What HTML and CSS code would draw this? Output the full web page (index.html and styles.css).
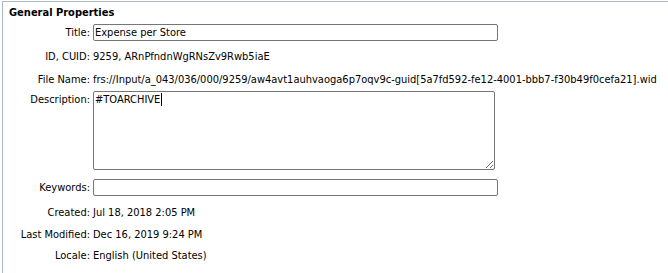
FILE: index.html
```html
<!DOCTYPE html>
<html lang="en">
<head>
    <meta charset="UTF-8">
    <title>General Properties</title>
    <link rel="stylesheet" href="styles.css">
</head>
<body>
    <div class="panel">
        <div class="panel-title">General Properties</div>
        <div class="props">
            <label class="prop-label">Title:</label>
            <div class="prop-value"><input type="text" class="field" value="Expense per Store"></div>

            <span class="prop-label">ID, CUID:</span>
            <span class="prop-value">9259, ARnPfndnWgRNsZv9Rwb5iaE</span>

            <span class="prop-label">File Name:</span>
            <span class="prop-value">frs://Input/a_043/036/000/9259/aw4avt1auhvaoga6p7oqv9c-guid[5a7fd592-fe12-4001-bbb7-f30b49f0cefa21].wid</span>

            <label class="prop-label top">Description:</label>
            <div class="prop-value top">
                <span class="area-wrap">
                    <textarea class="area">#TOARCHIVE</textarea>
                    <span class="caret"></span>
                </span>
            </div>

            <label class="prop-label">Keywords:</label>
            <div class="prop-value"><input type="text" class="field" value=""></div>

            <span class="prop-label">Created:</span>
            <span class="prop-value">Jul 18, 2018 2:05 PM</span>

            <span class="prop-label">Last Modified:</span>
            <span class="prop-value">Dec 16, 2019 9:24 PM</span>

            <span class="prop-label">Locale:</span>
            <span class="prop-value">English (United States)</span>
        </div>
    </div>
</body>
</html>
```

FILE: styles.css
```css
body {
    margin: 0;
    padding: 0;
    background: #fff;
    font-family: "DejaVu Sans Condensed", "DejaVu Sans", sans-serif;
    font-size: 11px;
    line-height: 13px;
    color: #000;
}

.panel {
    margin: 1px 0 0 2px;
    border-top: 1px solid #a9b8cd;
    border-left: 1px solid #a9b8cd;
    height: 272px;
    box-sizing: border-box;
}

.panel-title {
    font-weight: bold;
    padding: 4px 6px 1px;
}

.props {
    display: grid;
    grid-template-columns: 87px 1fr;
    grid-template-rows: 24px 24px 22px 84px 26px 24px 20px 22px;
    column-gap: 3px;
    align-items: center;
}

.prop-label {
    text-align: right;
    white-space: nowrap;
}

.prop-value {
    white-space: nowrap;
}

.prop-label.top {
    align-self: start;
    padding-top: 3px;
}

.prop-value.top {
    align-self: start;
    padding-top: 1px;
}

.field {
    display: block;
    width: 405px;
    height: 17px;
    box-sizing: border-box;
    margin: 0;
    padding: 0 1px;
    border: 1px solid #767676;
    border-radius: 2px;
    font: inherit;
    color: #000;
}

.area-wrap {
    position: relative;
    display: block;
    width: 402px;
    height: 79px;
}

.area {
    display: block;
    width: 402px;
    height: 79px;
    box-sizing: border-box;
    margin: 0;
    padding: 1px 1px;
    border: 1px solid #767676;
    border-radius: 2px;
    font: inherit;
    color: #000;
}

.caret {
    position: absolute;
    left: 68px;
    top: 2px;
    width: 1px;
    height: 13px;
    background: #000;
}
```
